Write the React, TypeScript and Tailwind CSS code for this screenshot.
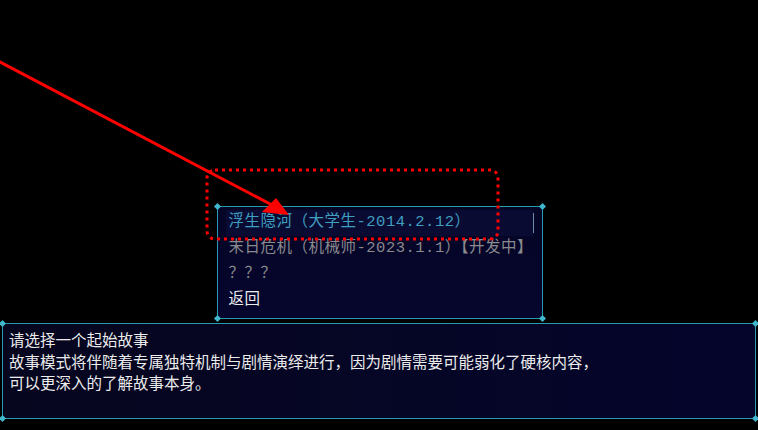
import { useState } from 'react';

type StoryOption = {
  label: string;
  tone: 'active' | 'locked' | 'plain';
};

const options: StoryOption[] = [
  { label: '浮生隐河（大学生-2014.2.12）', tone: 'active' },
  { label: '末日危机（机械师-2023.1.1）【开发中】', tone: 'locked' },
  { label: '？？？', tone: 'locked' },
  { label: '返回', tone: 'plain' },
];

const font = { fontFamily: '"Liberation Mono", "Noto Sans CJK SC", monospace' };

// Small diamond studs sitting on the corners of the window frames
function Corners() {
  return (
    <>
      <span className="absolute -left-[3px] -top-[3px] h-[5px] w-[5px] rotate-45 bg-[#3fb7cc]" />
      <span className="absolute -right-[3px] -top-[3px] h-[5px] w-[5px] rotate-45 bg-[#3fb7cc]" />
      <span className="absolute -left-[3px] -bottom-[3px] h-[5px] w-[5px] rotate-45 bg-[#3fb7cc]" />
      <span className="absolute -right-[3px] -bottom-[3px] h-[5px] w-[5px] rotate-45 bg-[#3fb7cc]" />
    </>
  );
}

function StoryMenu() {
  const [selected, setSelected] = useState(0);

  return (
    <div className="relative ml-px w-[326px] rounded-[3px] border border-[#2a98ad] bg-gradient-to-b from-[#050526] to-[#06062e] px-[8px] pt-[3px] pb-[4px]">
      <Corners />
      {options.map((opt, i) => (
        <button
          key={opt.label}
          onClick={() => setSelected(i)}
          className={
            'relative flex h-[26px] w-full items-center whitespace-nowrap pl-[3px] text-left text-[15.5px] tracking-[0.5px] ' +
            (selected === i ? 'bg-[#0a0b33] ' : '') +
            (opt.tone === 'active'
              ? 'text-[#3f9fc0]'
              : opt.tone === 'locked'
                ? 'text-[#8a8a8e]'
                : 'text-[#ececec]')
          }
          style={font}
        >
          {opt.label}
          {selected === i && (
            <span className="absolute right-[0px] top-[3px] h-[20px] w-px bg-[#6d8aa6]" />
          )}
        </button>
      ))}
    </div>
  );
}

function StoryHint() {
  return (
    <div
      className="relative mx-[2px] h-[96px] rounded-[3px] border border-[#2a98ad] bg-gradient-to-r from-[#06061f] to-[#05052c] px-[6px] pt-[5px] text-[15.5px] leading-[21.5px] text-[#ececec]"
      style={{ fontFamily: '"Noto Sans CJK SC", sans-serif' }}
    >
      <Corners />
      <p>请选择一个起始故事</p>
      <p>故事模式将伴随着专属独特机制与剧情演绎进行，因为剧情需要可能弱化了硬核内容，</p>
      <p>可以更深入的了解故事本身。</p>
    </div>
  );
}

// Red markup drawn over the screen: a pointer arrow and a dotted frame
function Markup() {
  return (
    <svg className="pointer-events-none absolute inset-0" width="758" height="430" viewBox="0 0 758 430">
      <rect
        x="207"
        y="170"
        width="291"
        height="69"
        rx="8"
        fill="none"
        stroke="#ff0000"
        strokeWidth="3"
        strokeDasharray="3 4"
      />
      <line x1="-2" y1="61" x2="272" y2="205" stroke="#ff0000" strokeWidth="3" />
      <polygon points="289,215 262,212 276,198" fill="#ff0000" />
    </svg>
  );
}

export default function App() {
  return (
    <div className="relative flex h-[430px] w-[758px] flex-col overflow-hidden bg-black">
      <div className="flex flex-1 items-end justify-center pb-[4px]">
        <StoryMenu />
      </div>
      <div className="pb-[11px]">
        <StoryHint />
      </div>
      <Markup />
    </div>
  );
}
